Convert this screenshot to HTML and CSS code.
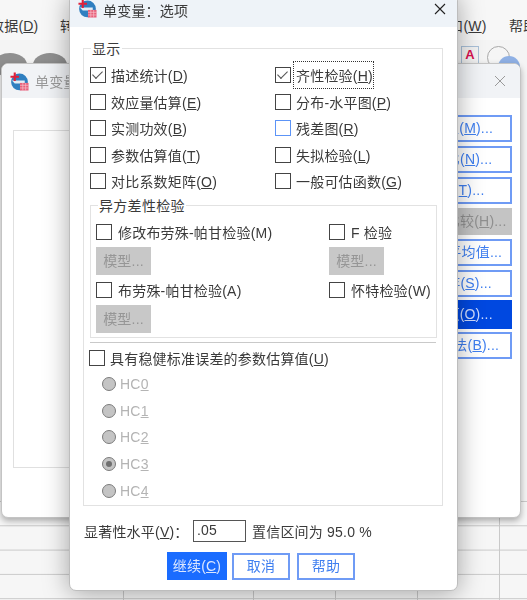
FILE: index.html
```html
<!DOCTYPE html>
<html lang="zh-CN">
<head>
    <meta charset="UTF-8">
    <meta name="viewport" content="width=device-width, initial-scale=1.0">
    <title>单变量：选项</title>
    <link rel="stylesheet" href="styles.css">
</head>
<body>
    <svg width="0" height="0" class="defs">
        <symbol id="app-icon" viewBox="0 0 20 20">
            <circle cx="10" cy="10.500" r="8.800" fill="#2f7fc0"/>
            <path d="M2 9h13.500v3H5z" fill="#e4edf5"/>
            <path d="M.5 5h9M5 .5v9" stroke="#e0203a" stroke-width="2.200" fill="none"/>
            <rect x="10.500" y="11.500" width="9" height="8" fill="#e8607a"/>
            <path d="M10.500 14h9M10.500 16.800h9M13.500 11.500v8M16.500 11.500v8" stroke="#f7c4ce" stroke-width=".7"/>
        </symbol>
    </svg>

    <!-- main window behind the dialogs -->
    <div class="menubar">
        <span class="menu menu-data">数据(<u>D</u>)</span>
        <span class="menu menu-trans">转换</span>
        <span class="menu menu-win">窗口(<u>W</u>)</span>
        <span class="menu menu-help">帮助</span>
    </div>
    <div class="toolbar">
        <div class="hump hump-a"></div>
        <div class="hump hump-b"></div>
        <div class="tool-a">A</div>
        <div class="tool-tip"></div>
        <div class="ball ball-white"></div>
        <div class="ball ball-blue"></div>
    </div>
    <div class="sheet">
        <div class="sheet-col col-1"></div>
        <div class="sheet-col col-2"></div>
        <div class="sheet-col col-3"></div>
        <div class="sheet-col col-3"></div>
        <div class="sheet-col col-3"></div>
    </div>

    <!-- parent dialog -->
    <div class="window parent">
        <div class="parent-title">
            <svg class="title-icon"><use href="#app-icon"/></svg>
            <span>单变量</span>
            <svg class="parent-close" viewBox="0 0 12 12"><path d="M1 1l10 10M11 1L1 11"/></svg>
        </div>
        <div class="parent-body">
            <div class="var-list"></div>
            <div class="side-buttons">
                <div class="side-btn">模型(<u>M</u>)...</div>
                <div class="side-btn">对比(<u>N</u>)...</div>
                <div class="side-btn">图(<u>T</u>)...</div>
                <div class="side-btn off">两两比较(<u>H</u>)...</div>
                <div class="side-btn">EM 平均值...</div>
                <div class="side-btn">保存(<u>S</u>)...</div>
                <div class="side-btn on">选项(<u>O</u>)...</div>
                <div class="side-btn">自助法(<u>B</u>)...</div>
            </div>
        </div>
    </div>

    <!-- options dialog -->
    <div class="window dialog">
        <div class="title">
            <svg class="title-icon"><use href="#app-icon"/></svg>
            <span>单变量：选项</span>
            <svg class="close" viewBox="0 0 12 12"><path d="M1 1l10 10M11 1L1 11"/></svg>
        </div>

        <div class="content">
            <div class="group display">
                <div class="legend">显示</div>
                <div class="check-grid">
                    <label class="check"><i class="box checked"></i><span>描述统计(<u>D</u>)</span></label>
                    <label class="check"><i class="box checked"></i><span class="focus">齐性检验(<u>H</u>)</span></label>
                    <label class="check"><i class="box"></i><span>效应量估算(<u>E</u>)</span></label>
                    <label class="check"><i class="box"></i><span>分布-水平图(<u>P</u>)</span></label>
                    <label class="check"><i class="box"></i><span>实测功效(<u>B</u>)</span></label>
                    <label class="check"><i class="box hover"></i><span>残差图(<u>R</u>)</span></label>
                    <label class="check"><i class="box"></i><span>参数估算值(<u>T</u>)</span></label>
                    <label class="check"><i class="box"></i><span>失拟检验(<u>L</u>)</span></label>
                    <label class="check"><i class="box"></i><span>对比系数矩阵(<u>O</u>)</span></label>
                    <label class="check"><i class="box"></i><span>一般可估函数(<u>G</u>)</span></label>
                </div>

                <div class="group hetero">
                    <div class="legend">异方差性检验</div>
                    <div class="hetero-grid">
                        <div>
                            <label class="check"><i class="box"></i><span>修改布劳殊-帕甘检验(M)</span></label>
                            <div class="model-btn">模型...</div>
                        </div>
                        <div>
                            <label class="check"><i class="box"></i><span>F 检验</span></label>
                            <div class="model-btn">模型...</div>
                        </div>
                        <div>
                            <label class="check"><i class="box"></i><span>布劳殊-帕甘检验(A)</span></label>
                            <div class="model-btn">模型...</div>
                        </div>
                        <div>
                            <label class="check"><i class="box"></i><span>怀特检验(W)</span></label>
                        </div>
                    </div>
                </div>

                <div class="robust">
                    <label class="check"><i class="box"></i><span>具有稳健标准误差的参数估算值(<u>U</u>)</span></label>
                    <div class="radios">
                        <div class="radio"><i class="dot"></i><span>HC<u>0</u></span></div>
                        <div class="radio"><i class="dot"></i><span>HC<u>1</u></span></div>
                        <div class="radio"><i class="dot"></i><span>HC<u>2</u></span></div>
                        <div class="radio"><i class="dot picked"></i><span>HC<u>3</u></span></div>
                        <div class="radio"><i class="dot"></i><span>HC<u>4</u></span></div>
                    </div>
                </div>
            </div>

            <div class="level-row">
                <span class="level-label">显著性水平(<u>V</u>)：</span>
                <div class="level-input">.05</div>
                <span>置信区间为 95.0 %</span>
            </div>

            <div class="actions">
                <div class="btn primary">继续(<u>C</u>)</div>
                <div class="btn">取消</div>
                <div class="btn">帮助</div>
            </div>
        </div>
    </div>
</body>
</html>
```

FILE: styles.css
```css
html, body {
    margin: 0;
    padding: 0;
    height: 100%;
    overflow: hidden;
}
body {
    position: relative;
    background-color: #f3f3f3;
    font-family: "Liberation Sans", "Noto Sans CJK SC", sans-serif;
    font-size: 14px;
    letter-spacing: 0.2px;
    color: #3a3a3a;
}
.defs {
    position: absolute;
}

/* main window */
.menubar {
    position: absolute;
    top: 0;
    left: 0;
    right: 0;
    height: 40px;
    background: #f7f7f7;
}
.menu {
    position: absolute;
    top: 16px;
    line-height: 20px;
    white-space: nowrap;
}
.menu-data { left: -10px; }
.menu-trans { left: 60px; }
.menu-win { left: 435px; }
.menu-help { left: 509px; }
.toolbar {
    position: absolute;
    top: 40px;
    left: 0;
    right: 0;
    height: 60px;
    background: #f4f4f4;
}
.hump {
    position: absolute;
    top: 13px;
    width: 34px;
    height: 24px;
    border-radius: 50%;
    background: #8f8f8f;
}
.hump-a { left: -7px; }
.hump-b { left: 33px; }
.tool-a {
    position: absolute;
    top: 6px;
    left: 461px;
    width: 16px;
    height: 16px;
    border: 1px solid #a9c0d8;
    background: #f2f2f2;
    color: #d8104e;
    font-weight: bold;
    font-size: 13px;
    line-height: 16px;
    text-align: center;
}
.tool-tip {
    position: absolute;
    top: 23px;
    left: 469px;
    border: 3px solid transparent;
    border-top: 0;
    border-bottom: 3px solid #4f7fd8;
}
.ball {
    position: absolute;
    border-radius: 50%;
}
.ball-white {
    top: 6px;
    left: 487px;
    width: 21px;
    height: 21px;
    border: 1px solid #a8a8a8;
    background: #f5f5f5;
}
.ball-blue {
    top: 16px;
    left: 498px;
    width: 22px;
    height: 22px;
    background: #8fb0e4;
}
.sheet {
    position: absolute;
    top: 501px;
    left: 0;
    right: 0;
    bottom: 0;
    display: flex;
    background-color: #f6f6f6;
    background-image: linear-gradient(#c9c9c9 1px, transparent 1px);
    background-size: 100% 24.300px;
}
.sheet-col {
    flex: none;
    box-sizing: border-box;
    border-right: 1px solid #c9c9c9;
}
.col-1 { width: 124px; }
.col-2 { width: 130px; }
.col-3 { width: 82px; }

/* windows */
.window {
    position: absolute;
    background: #fff;
    border-radius: 7px;
    box-sizing: border-box;
    filter: blur(0.3px);
}
.parent {
    top: 63px;
    left: 1px;
    width: 520px;
    height: 455px;
    border: 1px solid #c4c4c4;
    box-shadow: 0 3px 6px rgba(0, 0, 0, 0.3);
}
.parent-title {
    display: flex;
    align-items: center;
    gap: 6px;
    height: 34px;
    padding-left: 8px;
    background: #f1f3f6;
    border-radius: 7px 7px 0 0;
    color: #9a9a9a;
}
.parent-close {
    position: absolute;
    top: 11px;
    right: 14px;
    width: 12px;
    height: 12px;
    fill: none;
    stroke: #9a9a9a;
    stroke-width: 1;
}
.parent-body {
    display: flex;
    justify-content: space-between;
    padding: 17px 8px 0 11px;
}
.var-list {
    width: 200px;
    height: 336px;
    margin-top: 15px;
    border: 1px solid #e0e0e0;
}
.side-buttons {
    display: flex;
    flex-direction: column;
    gap: 4px;
    width: 100px;
}
.side-btn {
    box-sizing: border-box;
    height: 27px;
    line-height: 23px;
    border: 2px solid #6f9bf5;
    text-align: center;
    color: #3f7ff0;
    white-space: nowrap;
}
.side-btn.off {
    border-color: #c4c4c4;
    background: #c4c4c4;
    color: #8f8f8f;
}
.side-btn.on {
    height: 29px;
    margin: -1px 0;
    line-height: 25px;
    border-color: #0048e0;
    background: #0048e0;
    color: #cfdcff;
}
.dialog {
    top: -6px;
    left: 69px;
    width: 389px;
    height: 597px;
    border: 1px solid #bdbdbd;
    box-shadow: 0 2px 26px rgba(0, 0, 0, 0.35);
}
.title {
    display: flex;
    align-items: center;
    gap: 6px;
    height: 32px;
    padding: 0 0 3px 8px;
    box-sizing: border-box;
    background: #eef3f8;
    border-radius: 7px 7px 0 0;
}
.title-icon {
    flex: none;
    width: 19px;
    height: 19px;
}
.title .title-icon {
    margin-top: -3px;
}
.close {
    position: absolute;
    top: 8px;
    right: 11px;
    width: 12px;
    height: 12px;
    fill: none;
    stroke: #222;
    stroke-width: 1.100;
}
.content {
    padding: 21px 14px 0 13px;
}

/* groups */
.group {
    position: relative;
    border: 1px solid #e2e2e2;
}
.legend {
    position: absolute;
    top: -8px;
    left: 7px;
    padding: 0 1px;
    background: #fff;
    line-height: 16px;
    letter-spacing: 0.3px;
}
.display {
    box-sizing: border-box;
    width: 360px;
    height: 458px;
    padding: 14px 6px 0 6px;
}
.check-grid {
    display: grid;
    grid-template-columns: 185px 1fr;
    grid-auto-rows: 26.600px;
}
.check {
    display: flex;
    align-items: center;
    gap: 5px;
    height: 24px;
    white-space: nowrap;
}
.box {
    flex: none;
    position: relative;
    box-sizing: border-box;
    width: 16px;
    height: 16px;
    border: 1.500px solid #444;
    background: #fff;
}
.box.hover {
    border-color: #5c94f7;
}
.box.checked::after {
    content: "";
    position: absolute;
    top: 1px;
    left: 4px;
    width: 4px;
    height: 8px;
    border: solid #555;
    border-width: 0 1.500px 1.500px 0;
    transform: rotate(45deg) scale(1.100);
}
.focus {
    outline: 1px dotted #333;
    outline-offset: 0;
    padding: 3px 0 3px 2px;
    margin-left: -2px;
}
.hetero {
    box-sizing: border-box;
    width: 347px;
    height: 133px;
    margin-top: 9px;
    padding: 14px 5px 0 5px;
}
.hetero .check {
    gap: 6px;
}
.hetero-grid {
    display: grid;
    grid-template-columns: 233px 1fr;
}
.model-btn {
    width: 55px;
    height: 28px;
    line-height: 28px;
    margin: 3px 0;
    background: #c8c8c8;
    color: #969696;
    text-align: center;
}
.robust {
    margin-top: 4px;
    border-top: 1px solid #c9c9c9;
}
.robust > .check {
    margin: 3px 0 0 -1px;
}
.radios {
    display: flex;
    flex-direction: column;
    margin-top: 1px;
    padding-left: 12px;
}
.radio {
    display: flex;
    align-items: center;
    gap: 4px;
    height: 26.600px;
    color: #b4b4b4;
}
.dot {
    flex: none;
    position: relative;
    box-sizing: border-box;
    width: 14px;
    height: 14px;
    border: 1.500px solid #7c7c7c;
    border-radius: 50%;
    background: #c4c4c4;
}
.dot.picked::after {
    content: "";
    position: absolute;
    top: 2.500px;
    left: 2.500px;
    width: 6px;
    height: 6px;
    border-radius: 50%;
    background: #707070;
}

/* bottom */
.level-row {
    display: flex;
    align-items: center;
    margin-top: 14px;
    height: 22px;
    white-space: nowrap;
}
.level-label {
    width: 109px;
    margin-left: 1px;
}
.level-input {
    box-sizing: border-box;
    width: 53px;
    height: 22px;
    margin-right: 6px;
    padding-left: 3px;
    border: 1.500px solid #555;
    line-height: 19px;
}
.actions {
    display: flex;
    gap: 5px;
    margin: 11px 0 0 84px;
}
.btn {
    box-sizing: border-box;
    width: 58px;
    height: 27px;
    line-height: 23px;
    border: 2px solid #6f9bf5;
    text-align: center;
    color: #3f7ff0;
}
.btn + .btn + .btn {
    margin-left: 2px;
}
.btn.primary {
    width: 60px;
    height: 28px;
    margin-top: -1px;
    line-height: 24px;
    border-color: #1a6cff;
    background: #1a6cff;
    color: #dbe7ff;
}
```
